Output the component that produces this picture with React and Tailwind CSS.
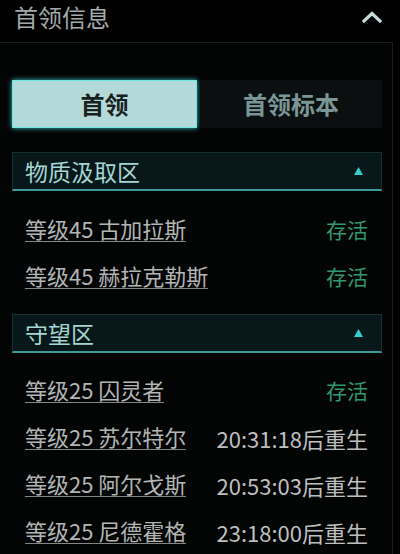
const FONT = { fontFamily: '"Noto Sans CJK SC", "Noto Sans", sans-serif' }

const zones = [
  {
    name: '物质汲取区',
    bosses: [
      { label: '等级45 古加拉斯', status: '存活' },
      { label: '等级45 赫拉克勒斯', status: '存活' },
    ],
  },
  {
    name: '守望区',
    bosses: [
      { label: '等级25 囚灵者', status: '存活' },
      { label: '等级25 苏尔特尔', respawn: '20:31:18后重生' },
      { label: '等级25 阿尔戈斯', respawn: '20:53:03后重生' },
      { label: '等级25 尼德霍格', respawn: '23:18:00后重生' },
    ],
  },
]

function ZoneHeader({ name }) {
  return (
    <div className="h-[39px] flex items-center justify-between pl-[12px] pr-[18px] bg-[#08181a] border border-[#14302f] border-b-2 border-b-[#3c9a98]">
      <span className="text-[23px] leading-none text-[#a4d6d2]">{name}</span>
      <svg viewBox="0 0 10 9" className="w-[9px] h-[8px]">
        <path d="M5 0 L10 9 L0 9 Z" fill="#2fcfcf" />
      </svg>
    </div>
  )
}

function BossRow({ boss }) {
  return (
    <div className="h-[47px] flex items-center justify-between pl-[13px] pr-[14px]">
      <span className="text-[22px] leading-[23px] pb-px border-b border-[#858787] text-[#b3b5b5] whitespace-nowrap">
        {boss.label}
      </span>
      {boss.status ? (
        <span className="text-[21px] leading-none text-[#2f9970]">{boss.status}</span>
      ) : (
        <span className="text-[22px] leading-none text-[#bdbfbf] whitespace-nowrap">{boss.respawn}</span>
      )}
    </div>
  )
}

export default function App() {
  return (
    <div className="w-[400px] h-[554px] bg-black overflow-hidden flex flex-col" style={FONT}>
      <div className="h-[42px] flex-shrink-0 flex items-center justify-between pl-[14px] pr-[18px] pb-[8px]">
        <h1 className="text-[24px] leading-none text-[#a2aaaa]">首领信息</h1>
        <svg viewBox="0 0 20 12" className="w-[20px] h-[12px]" fill="none">
          <path d="M2 10 L10 2.5 L18 10" stroke="#c6dcdc" strokeWidth={3.2} strokeLinecap="square" />
        </svg>
      </div>

      <div className="flex-1 border-t border-r border-[#1a1d1d] bg-[#030404] pl-[12px] pr-[10px] w-[393px]">
        <div className="mt-[37px] h-[48px] flex gap-[3px]">
          <button className="w-[185px] flex items-center justify-center bg-[#b3d9d8] border border-[#6fe6e6] shadow-[0_0_5px_#3cc8c8] text-[24px] font-bold text-[#182020]">
            首领
          </button>
          <button className="flex-1 flex items-center justify-center bg-[#0c0f0f] text-[24px] font-bold text-[#7a9696]">
            首领标本
          </button>
        </div>

        <div className="mt-[24px]">
          <ZoneHeader name={zones[0].name} />
          <div className="mt-[15px]">
            {zones[0].bosses.map((b) => <BossRow key={b.label} boss={b} />)}
          </div>
        </div>

        <div className="mt-[14px]">
          <ZoneHeader name={zones[1].name} />
          <div className="mt-[14px]">
            {zones[1].bosses.map((b) => <BossRow key={b.label} boss={b} />)}
          </div>
        </div>
      </div>
    </div>
  )
}
